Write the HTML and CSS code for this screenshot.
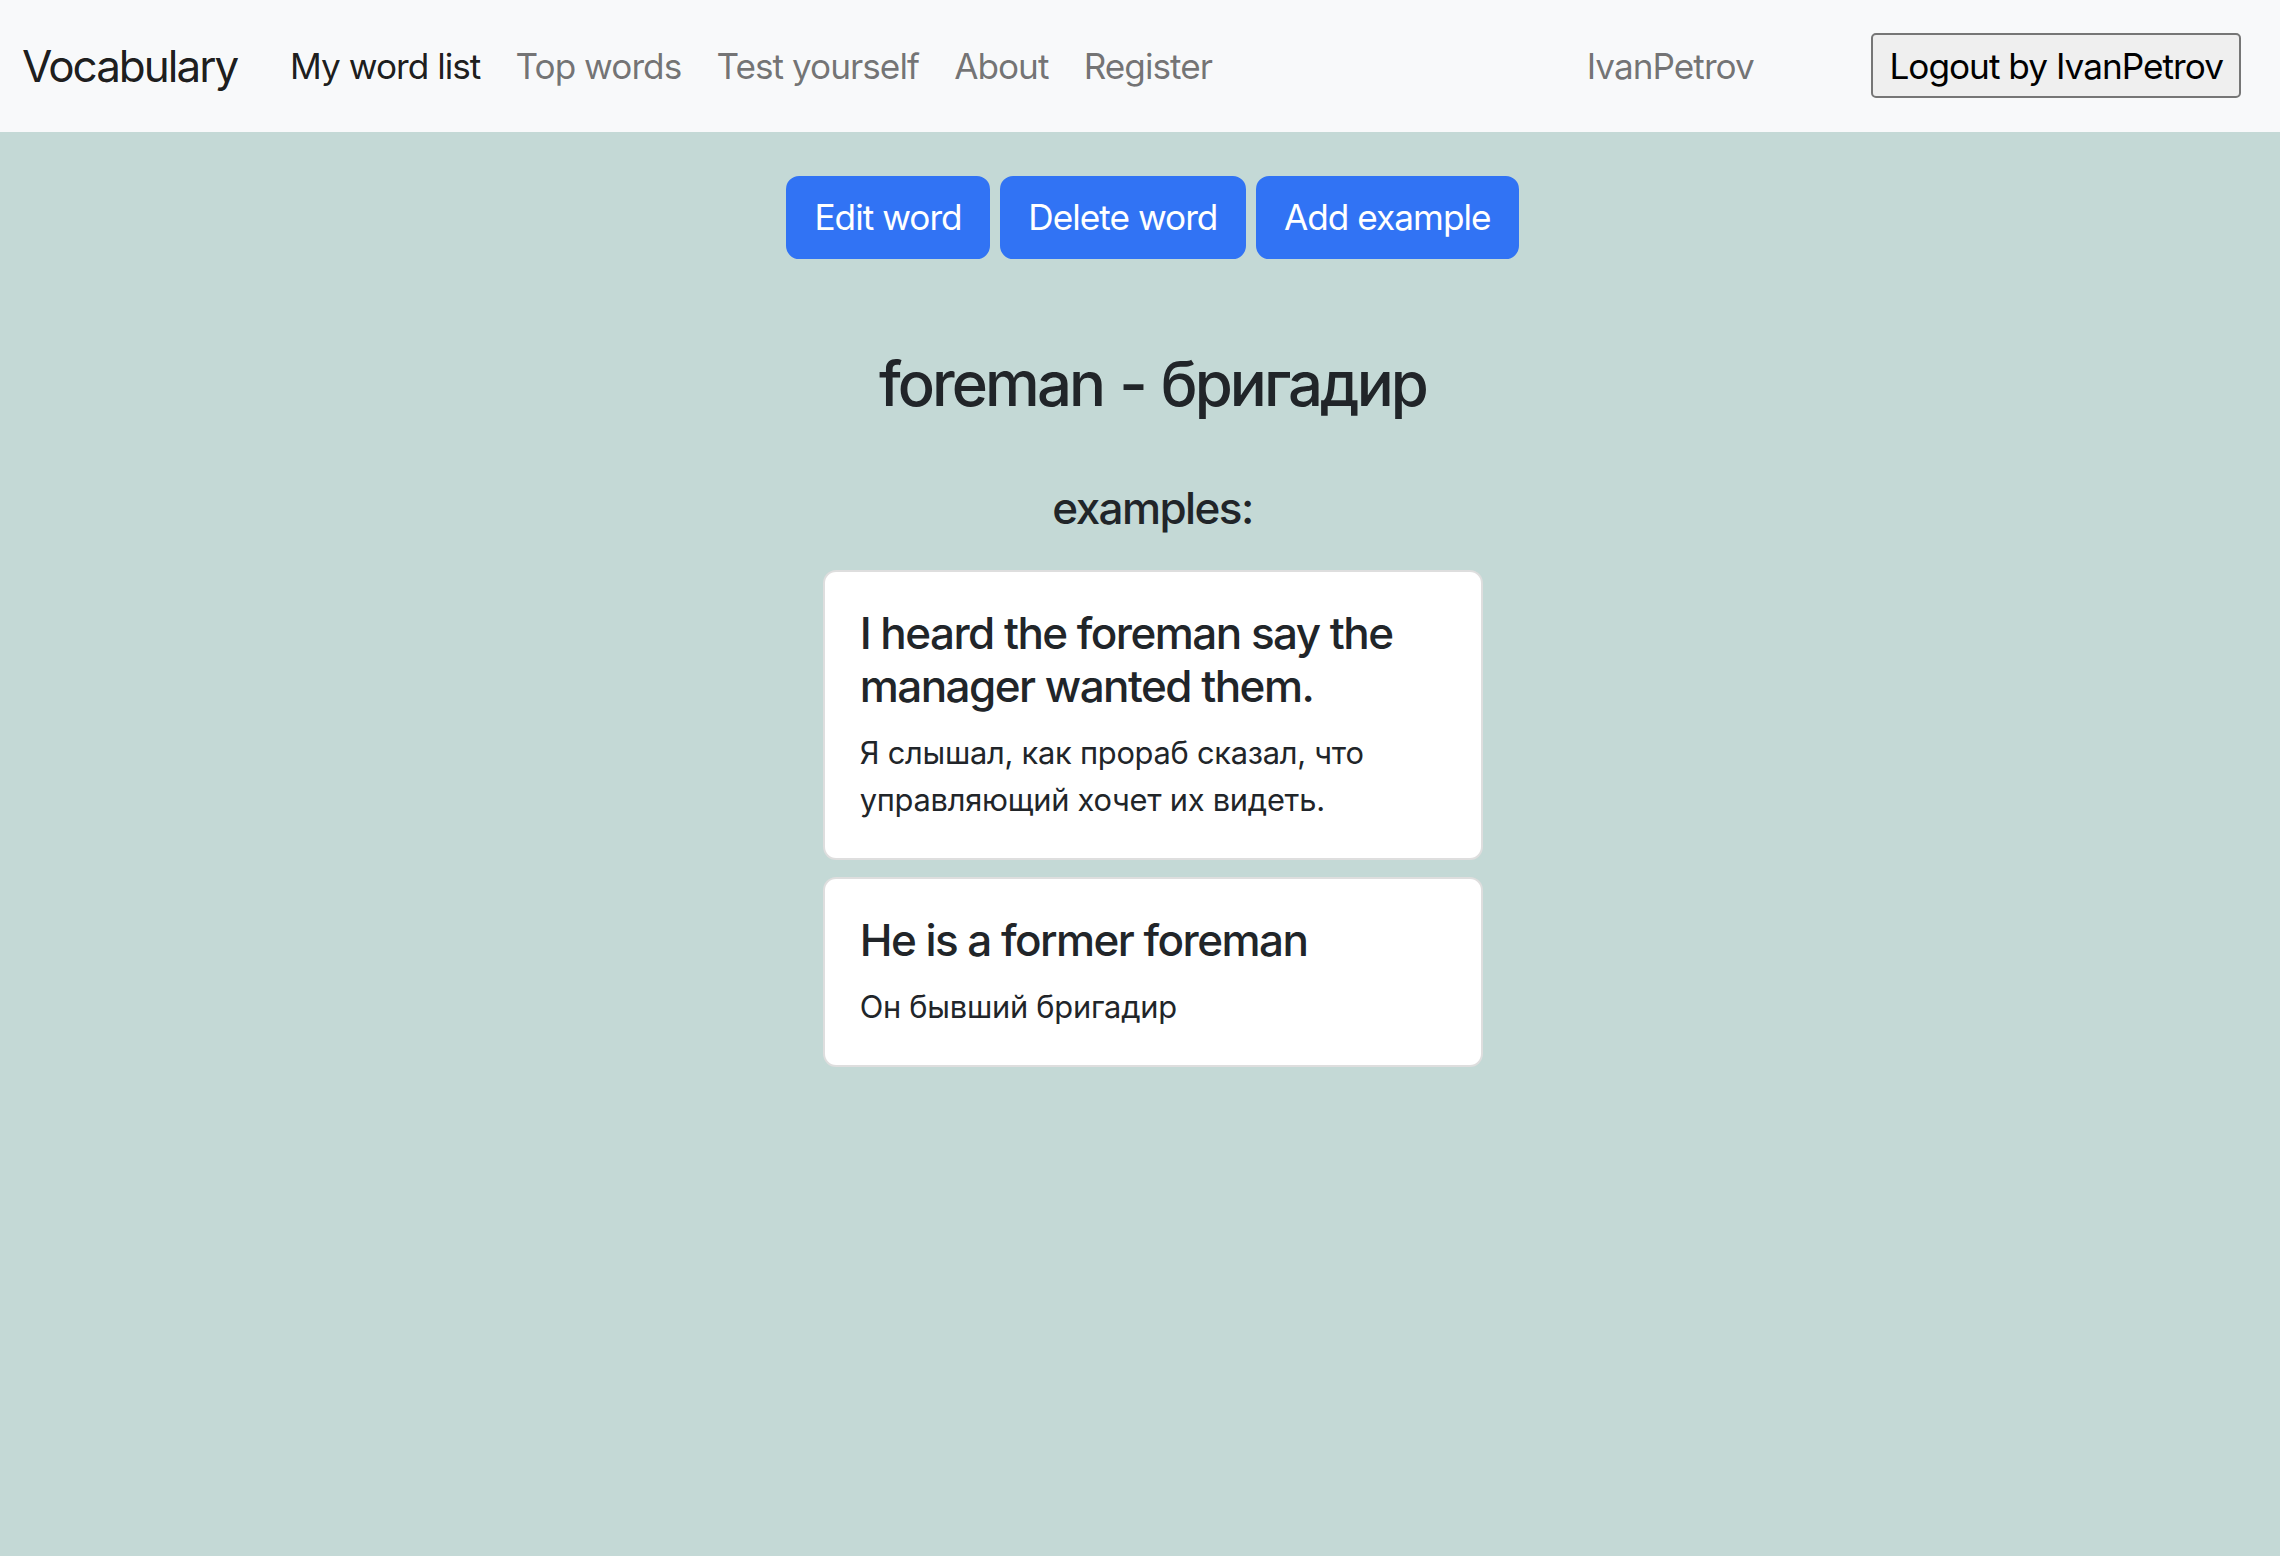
FILE: index.html
```html
<!DOCTYPE html>
<html lang="en">
<head>
<meta charset="utf-8">
<title>Vocabulary</title>
<link rel="stylesheet" href="styles.css">
</head>
<body>
<nav class="navbar">
  <a class="brand" href="#">Vocabulary</a>
  <ul class="nav-links">
    <li><a class="nav-link active" href="#">My word list</a></li>
    <li><a class="nav-link" href="#">Top words</a></li>
    <li><a class="nav-link" href="#">Test yourself</a></li>
    <li><a class="nav-link" href="#">About</a></li>
    <li><a class="nav-link" href="#">Register</a></li>
  </ul>
  <div class="nav-user">
    <a class="nav-link" href="#">IvanPetrov</a>
    <button class="logout" type="button">Logout by IvanPetrov</button>
  </div>
</nav>
<main class="main">
  <div class="actions">
    <a class="btn" href="#">Edit word</a>
    <a class="btn" href="#">Delete word</a>
    <a class="btn" href="#">Add example</a>
  </div>
  <h3 class="word-title">foreman - бригадир</h3>
  <h5 class="examples-title">examples:</h5>
  <div class="cards">
    <div class="card">
      <h5 class="card-title">I heard the foreman say the manager wanted them.</h5>
      <p class="card-text">Я слышал, как прораб сказал, что управляющий хочет их видеть.</p>
    </div>
    <div class="card">
      <h5 class="card-title">He is a former foreman</h5>
      <p class="card-text">Он бывший бригадир</p>
    </div>
  </div>
</main>
</body>
</html>
```

FILE: styles.css
```css
* { box-sizing: border-box; }
html, body { margin: 0; padding: 0; }
body {
  font-family: Inter, "Noto Sans", sans-serif;
  font-size: 35.2px;
  line-height: 1.5;
  color: #212529;
  background: #c4d9d6;
  min-height: 1556px;
  letter-spacing: -0.028em;
}
a { text-decoration: none; }

.navbar {
  display: flex;
  align-items: center;
  height: 132px;
  background: #f8f9fa;
  padding: 0 26.4px 0 22px;
}
.brand {
  font-size: 44px;
  line-height: 66px;
  color: rgba(0,0,0,.9);
  margin-right: 35.2px;
  letter-spacing: -0.045em;
}
.nav-links {
  display: flex;
  list-style: none;
  margin: 0;
  padding: 0;
  flex: 1;
}
.nav-link {
  display: block;
  padding: 17.6px;
  color: rgba(0,0,0,.55);
  line-height: 52.8px;
}
.nav-link.active { color: rgba(0,0,0,.9); }
.nav-user {
  display: flex;
  align-items: center;
}
.nav-user .nav-link { margin-right: 100px; }
.logout {
  font-family: Inter, "Noto Sans", sans-serif;
  font-size: 35.2px;
  letter-spacing: -0.028em;
  color: #000;
  background: #efefef;
  border: 2.2px solid #767676;
  border-radius: 5px;
  height: 65px;
  padding: 0 16px;
  margin-right: 12.6px;
}

.main {
  display: flex;
  flex-direction: column;
  align-items: center;
  padding-left: 25px;
}
.actions {
  display: flex;
  gap: 9.8px;
  margin-top: 44px;
}
.btn {
  display: inline-block;
  background: #3173f4;
  color: #fff;
  border: 2.2px solid #3173f4;
  border-radius: 13.2px;
  padding: 13.2px 26.4px;
  line-height: 52.8px;
  font-size: 35.2px;
}
.word-title {
  font-size: 61.6px;
  font-weight: 500;
  line-height: 1.2;
  margin: 88px 0 0;
  letter-spacing: -0.047em;
  word-spacing: 0.04em;
}
.examples-title {
  font-size: 44px;
  font-weight: 500;
  line-height: 1.2;
  margin: 61px 0 0;
  letter-spacing: -0.036em;
}
.cards {
  display: flex;
  flex-direction: column;
  gap: 16.5px;
  margin-top: 35.2px;
}
.card {
  width: 660px;
  background: #fff;
  border: 2.2px solid rgba(0,0,0,.13);
  border-radius: 13.2px;
  padding: 35.2px;
}
.card-title {
  font-size: 44px;
  font-weight: 500;
  line-height: 1.2;
  margin: 0 0 17.6px;
  letter-spacing: -0.035em;
}
.card-text {
  font-size: 30.8px;
  line-height: 1.5;
  margin: 0;
  letter-spacing: -0.008em;
}
```
